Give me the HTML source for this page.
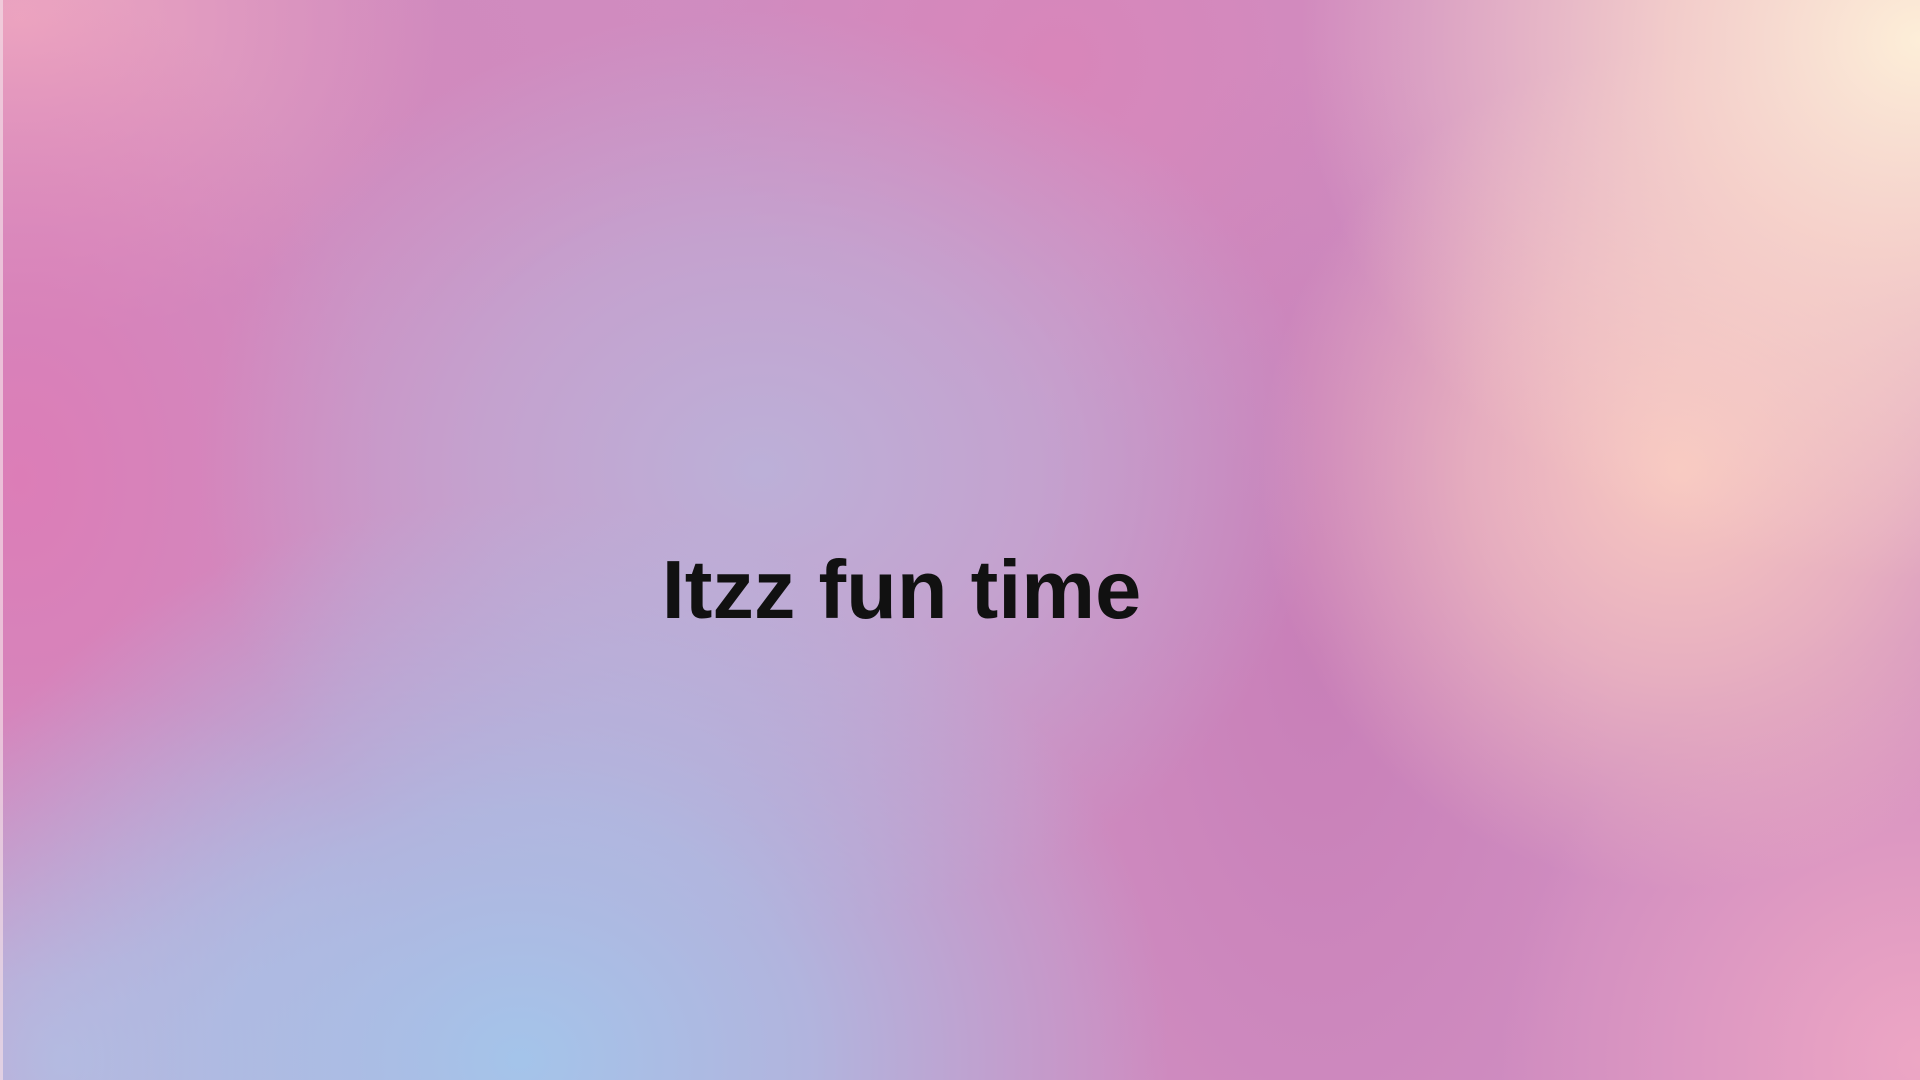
<!DOCTYPE html>
<html><head><meta charset="utf-8"><style>
html,body{margin:0;padding:0;width:1920px;height:1080px;overflow:hidden}
body{position:relative;background:#cf8cc0;
background-image:
radial-gradient(ellipse 650px 560px at 520px 1060px,#a4c4ea 0%,rgba(165,197,234,0.7) 45%,rgba(165,197,234,0) 100%),
radial-gradient(ellipse 560px 460px at 760px 470px,#bcb0d8 0%,rgba(189,176,216,0.6) 50%,rgba(189,176,216,0) 100%),
radial-gradient(ellipse 620px 540px at 1920px 40px,#fdeed8 0%,rgba(251,220,205,0.8) 40%,rgba(245,200,195,0) 100%),
radial-gradient(ellipse 420px 420px at 1680px 470px,#f8c8c0 0%,rgba(246,197,192,0.6) 50%,rgba(246,197,192,0) 100%),
radial-gradient(ellipse 420px 420px at 1920px 1060px,#eda6c4 0%,rgba(237,166,196,0) 100%),
radial-gradient(ellipse 360px 500px at 20px 480px,#dc7db7 0%,rgba(220,125,183,0) 100%),
radial-gradient(ellipse 420px 320px at 20px 20px,#eda6c0 0%,rgba(237,166,192,0) 100%),
radial-gradient(ellipse 380px 380px at 60px 1060px,#bcb4dc 0%,rgba(188,180,220,0) 100%),
radial-gradient(ellipse 300px 600px at 1320px 650px,#c87fb8 0%,rgba(200,127,184,0) 100%),
radial-gradient(ellipse 360px 360px at 1060px 60px,#d886ba 0%,rgba(216,134,186,0) 100%),
radial-gradient(ellipse 360px 300px at 400px 60px,#d18abe 0%,rgba(209,138,190,0) 100%);
}
.edge{position:absolute;left:0;top:0;width:3px;height:1080px;background:#f2dce6;opacity:.7}
h1{position:absolute;left:0;width:1803px;top:542px;margin:0;text-align:center;font:bold 83px "Liberation Sans","DejaVu Sans",sans-serif;color:#111}
</style></head><body><div class="edge"></div><h1>Itzz fun time</h1></body></html>
